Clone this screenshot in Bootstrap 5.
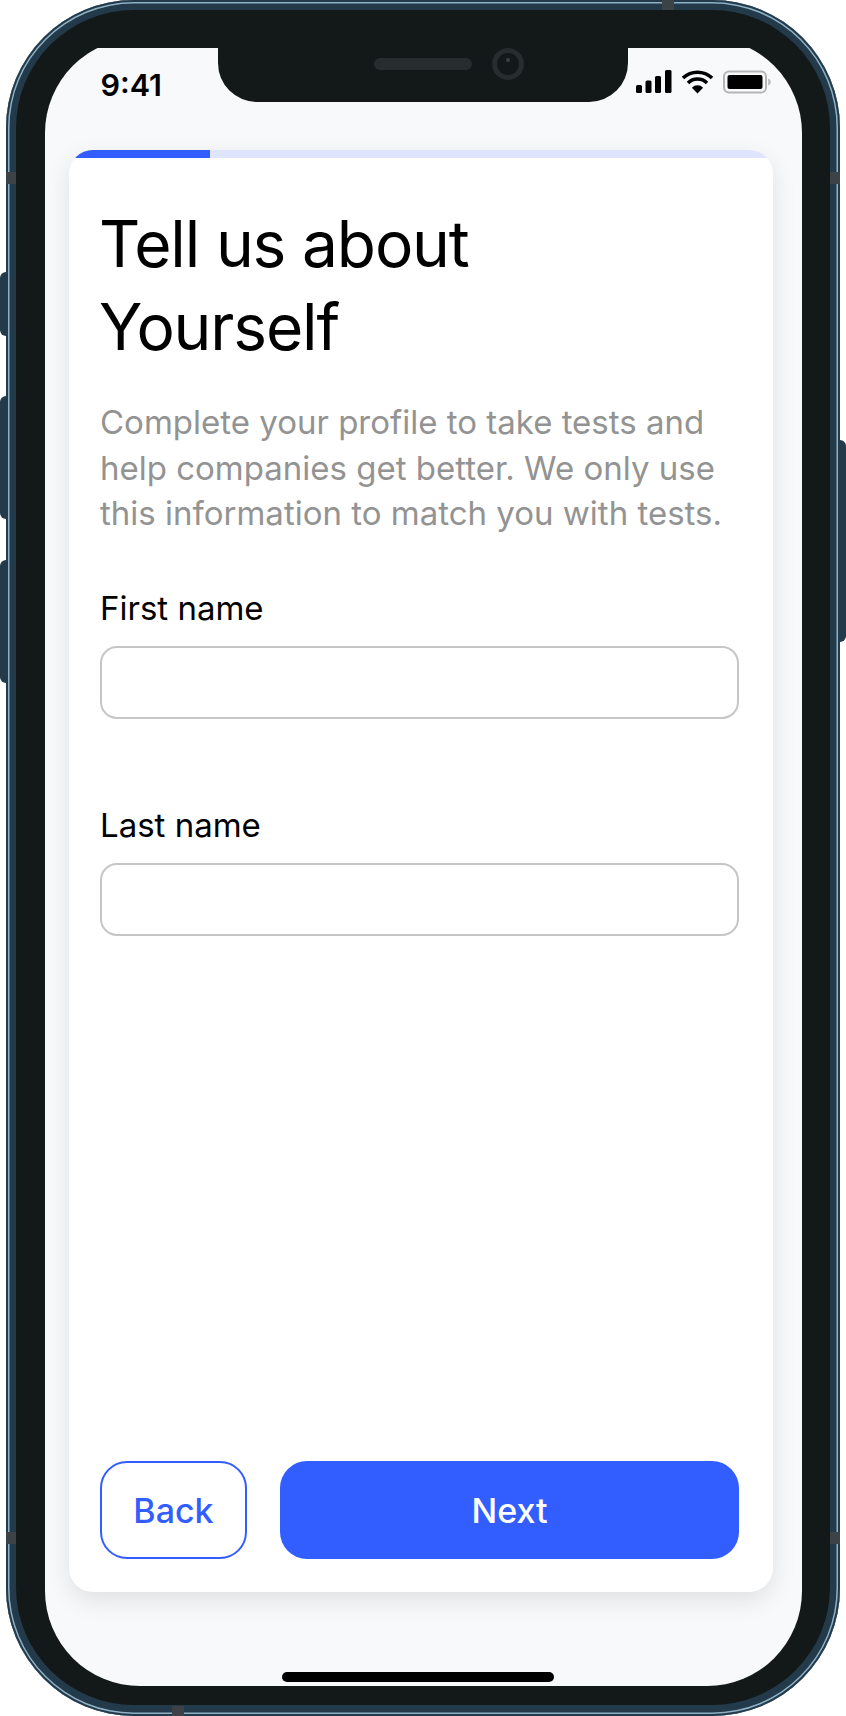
<!DOCTYPE html>
<html lang="en">
<head>
<meta charset="utf-8">
<title>Tell us about Yourself</title>
<link href="https://cdn.jsdelivr.net/npm/bootstrap@5.3.0/dist/css/bootstrap.min.css" rel="stylesheet">
<style>
html,body{margin:0;background:#fff;}
body{font-family:"Inter","Liberation Sans",sans-serif;color:#000;width:846px;height:1716px;overflow:hidden;}
.phone{position:relative;margin-left:6px;width:834px;height:1716px;border-radius:128px;background:#223a4a;box-shadow:inset 0 0 0 2px #223a4a,inset 0 0 0 3.5px #8fb0c5;padding:10px 10px 11px;}
.bezel{height:100%;border-radius:118px;background:#131819;padding:28px 28px 19px 28.5px;}
.screen{position:relative;height:100%;border-radius:95px;background:#f8f9fb;clip-path:inset(10px 0 0 0);padding:0 29px 0 24.5px;}
.notch{position:absolute;left:173.5px;top:10px;width:410px;height:54px;background:#131819;border-radius:0 0 39px 39px;}
.speaker{width:98px;height:12px;border-radius:6px;background:#272c2e;left:156px;top:10px;position:absolute;}
.lens{position:absolute;left:274px;top:0;}
.status{height:112px;padding:31px 0 0 31.500px;}
.clock{font-size:30.500px;font-weight:600;line-height:32px;}
.status-icons{gap:10px;margin-right:1px;padding-top:1px;}
.sheet{height:1442px;border:0;border-radius:24px;overflow:hidden;background:#fff;box-shadow:0 8px 24px rgba(0,0,0,.1);}
.bar-track{height:8px;border-radius:0;background:#dfe4ff;}
.bar-fill{background:#335eff;}
.sheet-body{padding:44px 34px 33px 31px;}
.headline{font-family:"Inter",sans-serif;font-size:64px;font-weight:400;line-height:83px;letter-spacing:-1.15px;margin:0 0 32px -1px;color:#000;}
.intro{font-size:33px;line-height:45.500px;color:#939393;margin:0 0 48px;}
.fld-label{font-size:33px;line-height:46px;margin:0 0 15px;color:#000;}
.fld-input{height:73px;border:2px solid #c6c6c6;border-radius:17px;background:#fff;margin-bottom:83px;}
.act{height:98px;border-radius:27px;font-size:34px;font-weight:500;display:flex;align-items:center;justify-content:center;}
.act-back{width:147px;border:2px solid #335eff;color:#335eff;background:#fff;}
.act-next{flex:1;background:#335eff;color:#fff;border:0;}
.act-row{gap:33px;}
.homebar{position:absolute;left:237.500px;top:1634px;width:272px;height:10px;border-radius:5px;background:#000;}
.sidekey{position:absolute;background:#223a4a;}
.k1{left:-6px;top:272px;width:6px;height:64px;border-radius:6px 0 0 6px;}
.k2{left:-6px;top:396px;width:6px;height:123px;border-radius:6px 0 0 6px;}
.k3{left:-6px;top:560px;width:6px;height:123px;border-radius:6px 0 0 6px;}
.k4{left:834px;top:440px;width:6px;height:202px;border-radius:0 6px 6px 0;}
.band{position:absolute;background:#3c4245;}
.b1{left:0;top:172px;width:10px;height:12px;}
.b2{left:0;top:1532px;width:10px;height:12px;}
.b3{right:0;top:172px;width:10px;height:12px;}
.b4{right:0;top:1532px;width:10px;height:12px;}
.b5{left:656px;top:0;width:12px;height:10px;}
.b6{left:166px;top:1706px;width:12px;height:10px;}
</style>
</head>
<body>
<div class="phone">
  <span class="sidekey k1"></span><span class="sidekey k2"></span><span class="sidekey k3"></span><span class="sidekey k4"></span>
  <span class="band b1"></span><span class="band b2"></span><span class="band b3"></span><span class="band b4"></span><span class="band b5"></span><span class="band b6"></span>
  <div class="bezel">
    <div class="screen">
      <div class="status d-flex justify-content-between align-items-start">
        <div class="clock">9:41</div>
        <div class="status-icons d-flex align-items-start">
          <svg width="36" height="24" viewBox="0 0 36 24"><rect x="0" y="15" width="6" height="8" rx="1.500" fill="#000"/><rect x="9.500" y="10.500" width="6" height="12.500" rx="1.500" fill="#000"/><rect x="19" y="6" width="6" height="17" rx="1.500" fill="#000"/><rect x="29" y="0" width="6.500" height="23" rx="1.500" fill="#000"/></svg>
          <svg width="31" height="24" viewBox="0 0 31 24"><path d="M1 8a21 21 0 0 1 29 0M6 13a13.500 13.500 0 0 1 19 0" fill="none" stroke="#000" stroke-width="3.500"/><path d="M15.500 23.500l-5.600-5.800a7.800 7.800 0 0 1 11.200 0z" fill="#000"/></svg>
          <svg width="49" height="24" viewBox="0 0 49 24"><rect x="1" y="1.500" width="42" height="21" rx="5" fill="none" stroke="#b5b5b5" stroke-width="2"/><rect x="4.500" y="5" width="35" height="14" rx="2" fill="#000"/><path d="M45 8.500c2 .6 3 2 3 3.500s-1 2.900-3 3.500z" fill="#c4c4c4"/></svg>
        </div>
      </div>
      <div class="sheet card">
        <div class="bar-track progress"><div class="bar-fill progress-bar" style="width:20%"></div></div>
        <div class="sheet-body d-flex flex-column flex-grow-1">
          <h1 class="headline">Tell us about<br>Yourself</h1>
          <p class="intro">Complete your profile to take tests and help companies get better. We only use this information to match you with tests.</p>
          <label class="fld-label" for="fn">First name</label>
          <input class="form-control fld-input" id="fn" type="text">
          <label class="fld-label" for="ln">Last name</label>
          <input class="form-control fld-input" id="ln" type="text">
          <div class="act-row d-flex mt-auto">
            <button class="btn act act-back" type="button">Back</button>
            <button class="btn act act-next" type="button">Next</button>
          </div>
        </div>
      </div>
      <div class="homebar"></div>
      <div class="notch">
        <span class="speaker"></span>
        <svg class="lens" width="32" height="32" viewBox="0 0 32 32"><circle cx="16" cy="16" r="13.500" fill="none" stroke="#272c2e" stroke-width="5"/><circle cx="16" cy="12" r="2" fill="#3a4043"/></svg>
      </div>
    </div>
  </div>
</div>
<script src="https://cdn.jsdelivr.net/npm/bootstrap@5.3.0/dist/js/bootstrap.bundle.min.js"></script>
</body>
</html>
